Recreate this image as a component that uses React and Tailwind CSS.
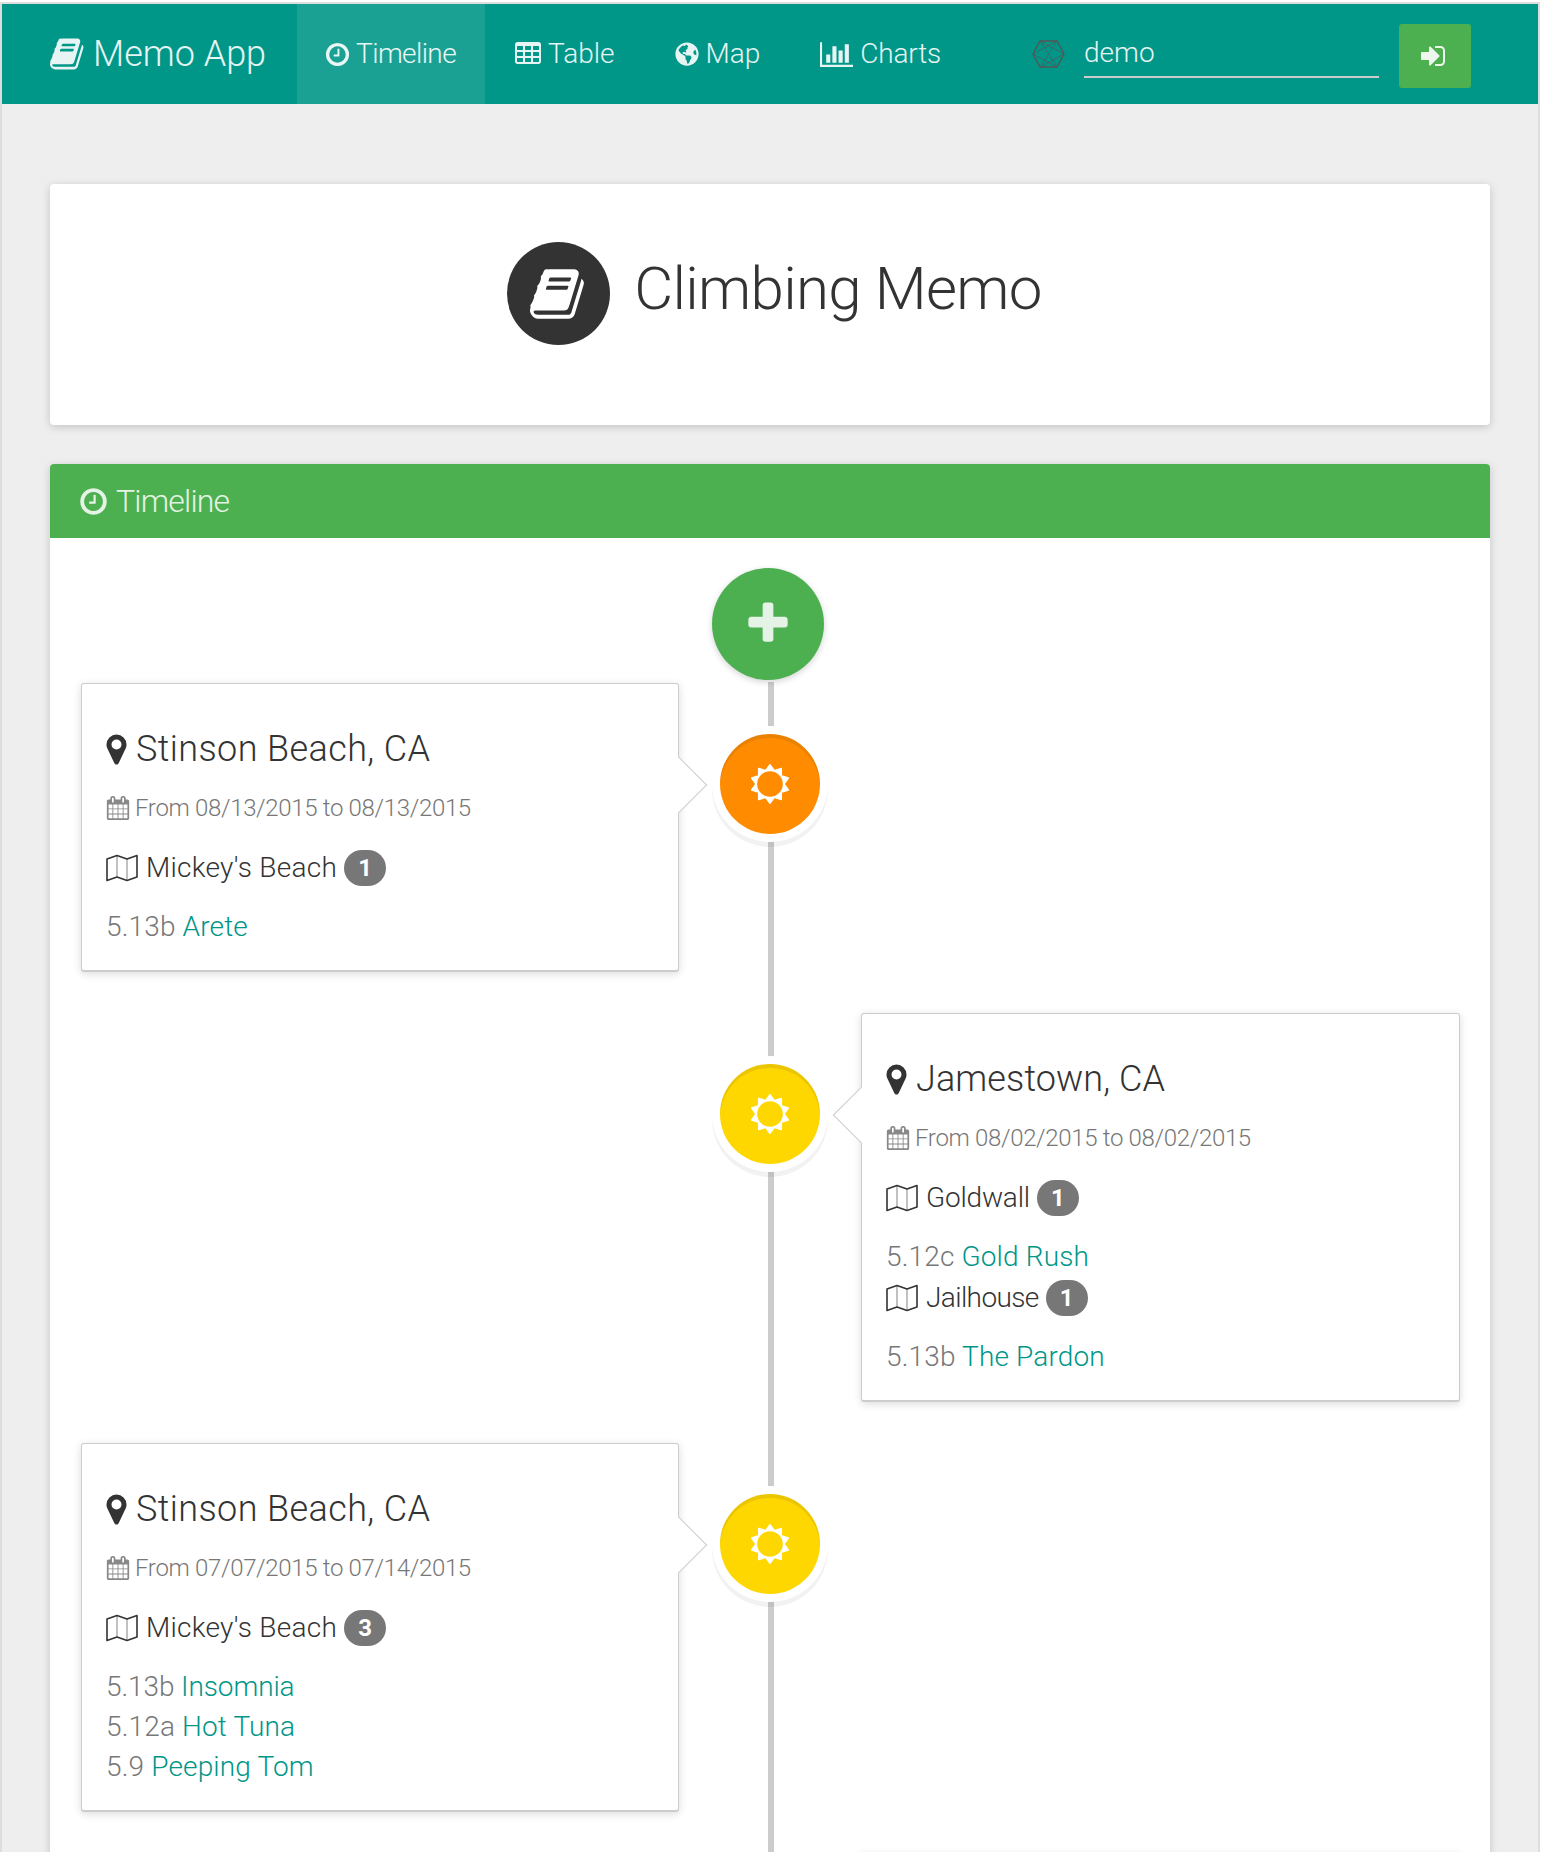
import React from "react";
import { FaGlobeAmericas } from "react-icons/fa";

const P = {
  book: "M1639 478q40 57 18 129l-275 906q-19 64-76.5 107.5t-122.5 43.5h-923q-77 0-148.5-53.5t-99.5-131.5q-24-67-2-127 0-4 3-27t4-37q1-8-3-21.5t-3-19.5q2-11 8-21t16.5-23.5 16.5-23.5q23-38 45-91.5t30-91.5q3-10 .5-30t-.5-28q3-11 17-28t17-23q21-36 42-92t25-90q1-9-2.5-32t.5-28q4-13 22-30.5t22-22.5q19-26 42.5-84.5t27.5-96.5q1-8-3-25.5t-2-26.5q2-8 9-18t18-23 17-21q8-12 16.5-30.5t15-35 16-36 19.5-32 26.5-23.5 36-11.5 47.5 5.5l-1 3q38-9 51-9h761q74 0 114 56t18 130l-274 906q-36 119-71.5 153.5t-128.5 34.5h-869q-27 0-38 15-11 16-1 43 24 70 144 70h923q29 0 56-15.5t35-41.5l300-987q7-22 5-57 38 15 59 43zm-1064 2q-4 13 2 22.5t20 9.5h608q13 0 25.5-9.5t16.5-22.5l21-64q4-13-2-22.5t-20-9.5h-608q-13 0-25.5 9.5t-16.5 22.5zm-83 256q-4 13 2 22.5t20 9.5h608q13 0 25.5-9.5t16.5-22.5l21-64q4-13-2-22.5t-20-9.5h-608q-13 0-25.5 9.5t-16.5 22.5z",
  sun: "M1472 896q0-117-45.5-223.5t-123-184-184-123-223.5-45.5-223.5 45.5-184 123-123 184-45.5 223.5 45.5 223.5 123 184 184 123 223.5 45.5 223.5-45.5 184-123 123-184 45.5-223.5zm276 277q-4 15-20 20l-292 96v306q0 16-13 26-15 10-29 4l-292-94-180 248q-10 13-26 13t-26-13l-180-248-292 94q-14 6-29-4-13-10-13-26v-306l-292-96q-16-5-20-20-5-17 4-29l180-248-180-248q-9-13-4-29 4-15 20-20l292-96v-306q0-16 13-26 15-10 29-4l292 94 180-248q9-12 26-12t26 12l180 248 292-94q14-6 29 4 13 10 13 26v306l292 96q16 5 20 20 5 16-4 29l-180 248 180 248q9 12 4 29z",
  marker: "M1152 640q0-106-75-181t-181-75-181 75-75 181 75 181 181 75 181-75 75-181zm256 0q0 109-33 179l-364 774q-16 33-47.5 52t-67.5 19-67.5-19-46.5-52l-365-774q-33-70-33-179 0-212 150-362t362-150 362 150 150 362z",
  plus: "M1600 736v192q0 40-28 68t-68 28h-416v416q0 40-28 68t-68 28h-192q-40 0-68-28t-28-68v-416h-416q-40 0-68-28t-28-68v-192q0-40 28-68t68-28h416v-416q0-40 28-68t68-28h192q40 0 68 28t28 68v416h416q40 0 68 28t28 68z",
  signin: "M1184 896q0 26-19 45l-544 544q-19 19-45 19t-45-19-19-45v-288h-448q-26 0-45-19t-19-45v-384q0-26 19-45t45-19h448v-288q0-26 19-45t45-19 45 19l544 544q19 19 19 45zm352-352v704q0 119-84.5 203.5t-203.5 84.5h-320q-13 0-22.5-9.5t-9.5-22.5q0-4-1-20t-.5-26.5 3-23.5 10-19.5 20.5-6.5h320q66 0 113-47t47-113v-704q0-66-47-113t-113-47h-312l-11.5-1-11.5-3-8-5.5-7-9-2-13.5q0-4-1-20t-.5-26.5 3-23.5 10-19.5 20.5-6.5h320q119 0 203.5 84.5t84.5 203.5z",
  clock: "M1024 544v448q0 14-9 23t-23 9h-320q-14 0-23-9t-9-23v-64q0-14 9-23t23-9h224v-352q0-14 9-23t23-9h64q14 0 23 9t9 23zm416 352q0-148-73-273t-198-198-273-73-273 73-198 198-73 273 73 273 198 198 273 73 273-73 198-198 73-273zm224 0q0 209-103 385.5t-279.5 279.5-385.5 103-385.5-103-279.5-279.5-103-385.5 103-385.5 279.5-279.5 385.5-103 385.5 103 279.5 279.5 103 385.5z",
  table: "M576 1376v-192q0-14-9-23t-23-9h-320q-14 0-23 9t-9 23v192q0 14 9 23t23 9h320q14 0 23-9t9-23zm0-384v-192q0-14-9-23t-23-9h-320q-14 0-23 9t-9 23v192q0 14 9 23t23 9h320q14 0 23-9t9-23zm512 384v-192q0-14-9-23t-23-9h-320q-14 0-23 9t-9 23v192q0 14 9 23t23 9h320q14 0 23-9t9-23zm-512-768v-192q0-14-9-23t-23-9h-320q-14 0-23 9t-9 23v192q0 14 9 23t23 9h320q14 0 23-9t9-23zm512 384v-192q0-14-9-23t-23-9h-320q-14 0-23 9t-9 23v192q0 14 9 23t23 9h320q14 0 23-9t9-23zm512 384v-192q0-14-9-23t-23-9h-320q-14 0-23 9t-9 23v192q0 14 9 23t23 9h320q14 0 23-9t9-23zm-512-768v-192q0-14-9-23t-23-9h-320q-14 0-23 9t-9 23v192q0 14 9 23t23 9h320q14 0 23-9t9-23zm512 384v-192q0-14-9-23t-23-9h-320q-14 0-23 9t-9 23v192q0 14 9 23t23 9h320q14 0 23-9t9-23zm0-384v-192q0-14-9-23t-23-9h-320q-14 0-23 9t-9 23v192q0 14 9 23t23 9h320q14 0 23-9t9-23zm128-320v1088q0 66-47 113t-113 47h-1344q-66 0-113-47t-47-113v-1088q0-66 47-113t113-47h1344q66 0 113 47t47 113z",
  calendar: "M192 1664h288v-288h-288v288zm352 0h320v-288h-320v288zm-352-352h288v-320h-288v320zm352 0h320v-320h-320v320zm-352-384h288v-288h-288v288zm736 736h320v-288h-320v288zm-384-736h320v-288h-320v288zm768 736h288v-288h-288v288zm-384-352h320v-320h-320v320zm-352-864v-288q0-13-9.5-22.5t-22.5-9.5h-64q-13 0-22.5 9.5t-9.5 22.5v288q0 13 9.5 22.5t22.5 9.5h64q13 0 22.5-9.5t9.5-22.5zm736 864h288v-320h-288v320zm-384-384h320v-288h-320v288zm384 0h288v-288h-288v288zm32-480v-288q0-13-9.5-22.5t-22.5-9.5h-64q-13 0-22.5 9.5t-9.5 22.5v288q0 13 9.5 22.5t22.5 9.5h64q13 0 22.5-9.5t9.5-22.5zm384-64v1280q0 52-38 90t-90 38h-1408q-52 0-90-38t-38-90v-1280q0-52 38-90t90-38h128v-96q0-66 47-113t113-47h64q66 0 113 47t47 113v96h384v-96q0-66 47-113t113-47h64q66 0 113 47t47 113v96h128q52 0 90 38t38 90z",
  chart: "M640 896v512h-256v-512h256zm384-512v1024h-256v-1024h256zm1024 1152v128h-2048v-1536h128v1408h1920zm-640-896v768h-256v-768h256zm384-384v1152h-256v-1152h256z",
};

function Fa({ d, className, box = "0 0 1792 1792" }) {
  return (
    <svg viewBox={box} className={className} fill="currentColor" aria-hidden="true">
      <path d={d} />
    </svg>
  );
}

function MapIcon() {
  return (
    <svg viewBox="0 0 32 28" className="w-[32px] h-[28px] shrink-0" fill="none" aria-hidden="true">
      <path d="M11 1.5V23M21 5V26.5" stroke="#999" strokeWidth="1.2" />
      <path d="M1 5L11 1.5L21 5L31 1.5V23L21 26.5L11 23L1 26.5Z" stroke="#333" strokeWidth="1.6" strokeLinejoin="round" />
    </svg>
  );
}

function Hexagon() {
  return (
    <svg viewBox="0 0 33 28" className="w-[33px] h-[28px]" fill="none" stroke="#555" strokeWidth="1" aria-hidden="true">
      <path d="M8 1H25L32 14L25 27H8L1 14Z" strokeWidth="1.3" />
      <path d="M8 1L25 27M25 1L8 27M1 14L25 1M1 14L25 27M32 14L8 1M32 14L8 27" strokeOpacity="0.7" />
    </svg>
  );
}

function NavItem({ icon, label, active, cls }) {
  return (
    <a className={`flex items-center h-full text-[28px] ${cls} ${active ? "bg-white/10" : ""}`}>
      {icon}
      <span>{label}</span>
    </a>
  );
}

function Route({ grade, name, track = "tracking-[0.15px]" }) {
  return (
    <div className={`h-[40px] leading-[40px] text-[28px] text-[#777] ${track}`}>
      {grade} <a className="text-[#009688]">{name}</a>
    </div>
  );
}

function Area({ name, count, routes, track }) {
  return (
    <div>
      <div className="flex items-center h-[40px] text-[28px] text-[#333]">
        <MapIcon />
        <span className={`ml-[8px] ${track}`}>{name}</span>
        <span className="ml-[7px] w-[42px] h-[36px] rounded-[18px] bg-[#777] text-white font-bold text-[24px] flex items-center justify-center">{count}</span>
      </div>
      <div className="mt-[19px] mb-[1px]">
        {routes.map((r) => (
          <Route key={r[1]} grade={r[0]} name={r[1]} track={r[2]} />
        ))}
      </div>
    </div>
  );
}

function Card({ place, track, dates, areas, side }) {
  return (
    <div className="relative bg-white border border-[#ccc] border-b-2 rounded-[3px] shadow-[0_2px_8px_rgba(0,0,0,0.14)] px-[24px] pt-[45px] pb-[22px]">
      <div
        className={`absolute top-[81px] w-[40px] h-[40px] bg-white rotate-45 border-[#ccc] ${
          side === "left" ? "right-[-21px] border-t border-r" : "left-[-21px] border-b border-l"
        }`}
      />
      <div className="relative">
        <h2 className={`flex items-center h-[40px] text-[36px] text-[#333] ${track}`}>
          <Fa d={P.marker} className="w-[35px] h-[35px] -ml-[7px] mr-[2px] shrink-0" />
          <span>{place}</span>
        </h2>
        <div className="flex items-center mt-[24px] h-[30px] text-[24px] tracking-[-0.33px] text-[#777]">
          <Fa d={P.calendar} className="w-[24px] h-[24px] mr-[5px] shrink-0 text-[#888]" />
          <span>{dates}</span>
        </div>
        <div className="mt-[25px]">
          {areas.map((a) => (
            <Area key={a.name} {...a} />
          ))}
        </div>
      </div>
    </div>
  );
}

function Node({ color }) {
  return (
    <div className="flex justify-center pt-[51px]">
      <div
        className={`relative w-[100px] h-[100px] rounded-full flex items-center justify-center text-white shadow-[0_0_0_8px_#fff,0_5px_0_8px_rgba(0,0,0,0.05)] ${color}`}
      >
        <div className="absolute inset-0 rounded-full shadow-[inset_0_4px_0_rgba(0,0,0,0.08)]" />
        <Fa d={P.sun} className="w-[40px] h-[40px]" />
      </div>
    </div>
  );
}

function Row({ side, color, card }) {
  return (
    <div className="relative grid grid-cols-[598px_182px_599px] mb-[41px]">
      {side === "left" ? <Card {...card} side="left" /> : <div />}
      <Node color={color} />
      {side === "right" ? <Card {...card} side="right" /> : <div />}
    </div>
  );
}

export default function App() {
  return (
    <div className="h-[1852px] overflow-hidden bg-white pt-[2px] font-['Roboto',sans-serif] font-light">
      <div className="w-[1540px] h-[1850px] overflow-hidden bg-[#eee] border-x-2 border-t-2 border-[#ddd]">
        <nav className="flex items-center h-[100px] bg-[#009688] text-white/90">
          <a className="flex items-center pl-[48px] pr-[31px] h-full text-[36px]">
            <Fa d={P.book} className="w-[36px] h-[36px] mr-[7px]" />
            <span>Memo App</span>
          </a>
          <NavItem active cls="pl-[27px] pr-[29px] gap-[5px] tracking-[-0.6px]" label="Timeline" icon={<Fa d={P.clock} className="w-[27px] h-[27px]" />} />
          <NavItem cls="pl-[29px] pr-[30px] gap-[6px] tracking-[0px]" label="Table" icon={<Fa d={P.table} className="w-[28px] h-[28px]" />} />
          <NavItem cls="pl-[30px] pr-[30px] gap-[7px] tracking-[0px]" label="Map" icon={<FaGlobeAmericas className="w-[24px] h-[24px]" />} />
          <NavItem cls="pl-[30px] pr-[30px] gap-[7px] tracking-[-0.2px]" label="Charts" icon={<Fa d={P.chart} box="0 0 2048 1792" className="w-[33px] h-[29px]" />} />
          <div className="ml-[61px] flex items-center h-full">
            <Hexagon />
            <div className="ml-[19px] w-[295px] h-[48px] pt-[5px] border-b-2 border-[#ccc] text-[28px] leading-[36px]">demo</div>
            <button className="ml-[20px] mt-[4px] w-[72px] h-[64px] rounded-[3px] bg-[#4caf50] flex items-center justify-center">
              <Fa d={P.signin} className="w-[28px] h-[28px]" />
            </button>
          </div>
        </nav>

        <main className="mx-[48px] mt-[80px]">
          <section className="h-[241px] bg-white rounded-[4px] shadow-[0_2px_8px_rgba(0,0,0,0.18)] flex justify-center pt-[58px] pl-[9px]">
            <div className="w-[103px] h-[103px] rounded-full bg-[#333] flex items-center justify-center text-white">
              <Fa d={P.book} className="w-[58px] h-[58px]" />
            </div>
            <h1 className="ml-[24px] mt-[10px] text-[60px] leading-[74px] tracking-[-0.7px] text-[#333]">Climbing Memo</h1>
          </section>

          <section className="relative mt-[39px] h-[1400px] bg-white rounded-t-[4px] shadow-[0_2px_8px_rgba(0,0,0,0.18)]">
            <header className="flex items-center h-[74px] pl-[28px] bg-[#4caf50] rounded-t-[4px] text-white/85 text-[32px] tracking-[-0.8px]">
              <Fa d={P.clock} className="w-[31px] h-[31px] mr-[7px]" />
              <span>Timeline</span>
            </header>
            <div className="absolute left-[718px] top-[218px] w-[6px] h-[1200px] bg-[#ccc]" />
            <div className="relative pl-[31px] pt-[30px]">
              <div className="ml-[631px] mb-[3px] w-[112px] h-[112px] rounded-full bg-[#4caf50] text-white/85 flex items-center justify-center shadow-[0_2px_6px_rgba(0,0,0,0.18)]">
                <Fa d={P.plus} className="w-[50px] h-[50px]" />
              </div>
              <Row
                side="left"
                color="bg-[#ff8c00]"
                card={{
                  place: "Stinson Beach, CA",
                  track: "tracking-[0.4px]",
                  dates: "From 08/13/2015 to 08/13/2015",
                  areas: [{ name: "Mickey's Beach", track: "tracking-[0.27px]", count: 1, routes: [["5.13b", "Arete"]] }],
                }}
              />
              <Row
                side="right"
                color="bg-[#ffd700]"
                card={{
                  place: "Jamestown, CA",
                  track: "tracking-[0.1px]",
                  dates: "From 08/02/2015 to 08/02/2015",
                  areas: [
                    { name: "Goldwall", track: "tracking-[-0.2px]", count: 1, routes: [["5.12c", "Gold Rush"]] },
                    { name: "Jailhouse", track: "tracking-[-0.6px]", count: 1, routes: [["5.13b", "The Pardon"]] },
                  ],
                }}
              />
              <Row
                side="left"
                color="bg-[#ffd700]"
                card={{
                  place: "Stinson Beach, CA",
                  track: "tracking-[0.4px]",
                  dates: "From 07/07/2015 to 07/14/2015",
                  areas: [
                    {
                      name: "Mickey's Beach",
                      track: "tracking-[0.27px]",
                      count: 3,
                      routes: [
                        ["5.13b", "Insomnia", "tracking-[-0.1px]"],
                        ["5.12a", "Hot Tuna"],
                        ["5.9", "Peeping Tom"],
                      ],
                    },
                  ],
                }}
              />
              <div className="ml-[780px] w-[599px] h-[40px] bg-white border border-[#ccc] rounded-[3px] shadow-[0_2px_8px_rgba(0,0,0,0.14)]" />
            </div>
          </section>
        </main>
      </div>
    </div>
  );
}
